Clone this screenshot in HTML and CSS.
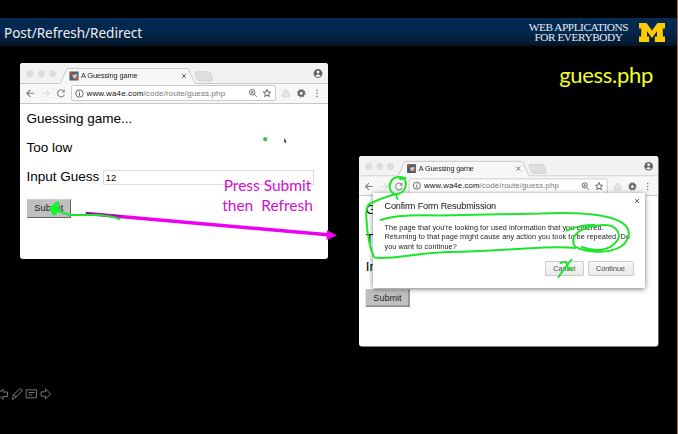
FILE: index.html
```
<!DOCTYPE html>
<html lang="en">
<head>
<meta charset="utf-8">
<title>Post/Refresh/Redirect</title>
<link rel="stylesheet" href="styles.css">
</head>
<body>
<svg class="defs" width="0" height="0">
  <symbol id="tabs" viewBox="0 0 308 21">
    <path d="M0 20.500H39.500Q40.500 20.500 41 19.500L46.500 6.500Q47 5.500 48 5.500H167Q168 5.500 168.500 6.500L174.500 19.500Q175 20.500 176 20.500H308V21H0Z" fill="#f7f7f7"/>
    <path d="M0 20.500H39.500Q40.500 20.500 41 19.500L46.500 6.500Q47 5.500 48 5.500H167Q168 5.500 168.500 6.500L174.500 19.500Q175 20.500 176 20.500H308" fill="none" stroke="#c8c8c8"/>
    <g fill="#dcdcdc"><circle cx="10" cy="10.700" r="3.500"/><circle cx="21.300" cy="10.700" r="3.500"/><circle cx="32.500" cy="10.700" r="3.500"/></g>
    <path d="M176 8.800H188.500Q190 8.800 190.600 10.300L192.600 16.200Q193 18 191.500 18H179.500Q178 18 177.300 16.500L175 10.500Q174.500 8.800 176 8.800Z" fill="#dedede" stroke="#c9c9c9" stroke-width=".7"/>
    <rect x="49.500" y="8.500" width="9" height="9" fill="#54545a"/><path d="M50 9h3v3h-3zM55 14h3v3h-3z" fill="#b14d47"/><path d="M53 9h5v3h-4zM50 14h3v3h-3z" fill="#426583"/><path d="M52 12l5-1v3l-3 2z" fill="#cfc4bd"/>
    <path d="M162 11L166 15M166 11L162 15" stroke="#555" stroke-width=".9"/>
    <circle cx="298" cy="10.500" r="4.400" fill="#606060"/><circle cx="298" cy="9" r="1.500" fill="#f6f6f6"/><path d="M295.300 12.700Q298 10.500 300.700 12.700Q298 15.300 295.300 12.700Z" fill="#f6f6f6"/>
  </symbol>
  <symbol id="nav" viewBox="0 0 51 20">
    <path d="M14 10.300H7M10.300 6.800L6.800 10.300L10.300 13.800" fill="none" stroke="#777" stroke-width="1.100"/>
    <path d="M22 10.300H29M25.700 6.800L29.200 10.300L25.700 13.800" fill="none" stroke="#ddd" stroke-width="1.100"/>
    <path d="M44 8.300A3.500 3.500 0 1 0 44.500 11.300" fill="none" stroke="#888" stroke-width="1.100"/><path d="M44.700 6.300V9.500H41.500Z" fill="#888"/>
  </symbol>
  <symbol id="info" viewBox="0 0 9 9"><circle cx="4.500" cy="4.500" r="3.700" fill="none" stroke="#555" stroke-width=".9"/><path d="M4.500 4.200V6.700M4.500 2.300V3.300" stroke="#555"/></symbol>
  <symbol id="search-star" viewBox="0 0 24 10">
    <circle cx="4.200" cy="4.300" r="2.700" fill="none" stroke="#666"/><path d="M6.200 6.300L8.800 8.800M2.900 4.300H5.500M4.200 3V5.600" stroke="#666" stroke-width=".9"/>
    <path d="M19 1.300L20.100 4L22.700 4.200L20.700 5.900L21.300 8.600L19 7.200L16.700 8.600L17.300 5.900L15.300 4.200L17.900 4Z" fill="none" stroke="#555" stroke-width=".9"/>
  </symbol>
  <symbol id="tools" viewBox="0 0 50 20">
    <path d="M8.500 6.500H11L14.500 12.800L13.200 14.500H7L5.500 12.300Z" fill="#ddd"/><path d="M9.700 9L8.200 12.500H12Z" fill="#eee"/>
    <circle cx="25.300" cy="10.300" r="2.500" fill="none" stroke="#666" stroke-width="1.900"/><circle cx="25.300" cy="10.300" r="3.700" fill="none" stroke="#666" stroke-width="1.100" stroke-dasharray="1.450 1.450"/>
    <g fill="#777"><circle cx="41" cy="7.200" r=".8"/><circle cx="41" cy="10.300" r=".8"/><circle cx="41" cy="13.400" r=".8"/></g>
  </symbol>
</svg>

<main class="slide">
  <header class="banner">
    <h1>Post/Refresh/Redirect</h1>
    <div class="brand">
      <p class="course">WEB APPLICATIONS<br>FOR EVERYBODY</p>
      <svg class="logo" viewBox="0 0 26 19"><path d="M0 0H7.500L13 7.500L18.500 0H26V5.500H23.800V13.500H26V19H15.800V13.500H18V8.200L13 15L8 8.200V13.500H10.200V19H0V13.500H2.200V5.500H0Z" fill="#ffcb05"/></svg>
    </div>
  </header>
  <section class="stage">
    <article class="window">
      <div class="tabs"><svg><use href="#tabs"/></svg><span class="tab-title">A Guessing game</span></div>
      <div class="toolbar">
        <svg class="nav"><use href="#nav"/></svg>
        <div class="address"><svg class="info"><use href="#info"/></svg><span class="url"><b>www.wa4e.com</b>/code/route/guess.php</span><svg class="actions"><use href="#search-star"/></svg></div>
        <svg class="tools"><use href="#tools"/></svg>
      </div>
      <div class="page">
        <p class="heading">Guessing game...</p>
        <p class="result">Too low</p>
        <p class="field"><label>Input Guess</label><span class="input">12</span></p>
        <button>Submit</button>
      </div>
    </article>
    <div class="right">
      <h2>guess.php</h2>
      <article class="window small">
        <div class="tabs"><svg><use href="#tabs"/></svg><span class="tab-title">A Guessing game</span></div>
        <div class="toolbar">
          <svg class="nav"><use href="#nav"/></svg>
          <div class="address"><svg class="info"><use href="#info"/></svg><span class="url"><b>www.wa4e.com</b>/code/route/guess.php</span><svg class="actions"><use href="#search-star"/></svg></div>
          <svg class="tools"><use href="#tools"/></svg>
        </div>
        <div class="page">
          <p class="heading">G</p>
          <p class="result">T</p>
          <p class="field"><label>In</label></p>
          <button>Submit</button>
        </div>
      </article>
    </div>
  </section>

  <section class="dialog">
    <svg class="close" viewBox="0 0 6 6"><path d="M1 1L5 5M5 1L1 5" stroke="#555" stroke-width=".9"/></svg>
    <h3>Confirm Form Resubmission</h3>
    <p class="message">The page that you're looking for used information that you entered.<br>Returning to that page might cause any action you took to be repeated. Do<br>you want to continue?</p>
    <div class="choices"><span class="choice cancel">Cancel</span><span class="choice">Continue</span></div>
  </section>

  <p class="note">Press Submit<br>then&nbsp; Refresh</p>

  <svg class="ink" viewBox="0 0 678 434" fill="none" stroke-linecap="round" stroke-linejoin="round">
    <path d="M86 213.500L328 234.800" stroke="#ec00ef" stroke-width="3.600" stroke-linecap="butt"/>
    <path d="M86 213L121 216" stroke="#8b168c" stroke-width="1.300"/>
    <path d="M327 230L337 235.500L326.500 240Z" fill="#f000f5"/>
    <g stroke="#1de52b" stroke-width="2">
      <path d="M55 209.500L63 212.800L70 215H99Q111 216 119.500 219"/>
      <path d="M50 208L56 203L58.500 202L57.500 206L59.500 210L54 215L52 212L50.500 209Z" fill="#10f52b" stroke="#10f52b" stroke-width="1.500"/>
      <circle cx="265.200" cy="139.300" r="1.300" stroke="#22b52b" stroke-width="1.500"/>
      <path d="M397.500 199L395.500 194M390.500 182Q387 190 395 194.500Q403 194 405.500 187Q407 178 401 177Q391 176 390 185M400 179L405.500 178"/>
      <path d="M394 194.500C385 197 378 200 371 203C366 205 365.500 211 366.500 220C367 233 370 250 374.500 257.500C390 260 415 253 448 252C480 252 500 250 525 248.500C550 247 567 247 575 248"/>
      <path d="M381 220C394 215 415 215 440 215.500C475 215 510 214 540 213.500C575 212 605 214 619 221C632 227 631 238 622 246C606 256 578 251 574 245C570 234 583 226 603 225C617 224 623 236 616 242C609 251 594 252 582 247"/>
      <path d="M566.500 230.500Q579 225 594 225"/>
      <path d="M558.500 277L565 268L571.500 259.500M560.500 263Q567 260 567 265Q568 271 572 268.500"/>
    </g>
    <path d="M284 138L286.500 141.500L284.500 142.500Z" fill="#111"/><path d="M285.500 141.500V142.500" stroke="#197024"/>
    <g stroke="#777" stroke-width="1">
      <path d="M0 392L3 389V392H7.500V396.500H3V399.500L0 396.500"/>
      <path d="M12.500 399L13.500 394.500L20 388.800Q22.500 388.500 22 391L15.500 397.500ZM14 394.500L16 397"/>
      <rect x="26.500" y="389.800" width="10" height="8"/><path d="M29 392.500H34M29 395H32"/>
      <path d="M41.500 391.800H45.500V388.800L50.500 394L45.500 399V396.200H41.500Z"/>
    </g>
  </svg>
</main>
</body>
</html>
```

FILE: styles.css
```
* { box-sizing: border-box; }
body { margin: 0; background: #000; font-family: "Liberation Sans", Arial, sans-serif; }
h1, h2, h3, p { margin: 0; font-weight: 400; }
svg { display: block; }
.defs { position: absolute; }
.slide { position: relative; width: 678px; height: 434px; padding-top: 18px; overflow: hidden; background: #000; border-right: 1px solid #bd663d; }
.banner { height: 28px; display: flex; align-items: center; justify-content: space-between; padding: 0 12px 0 4px; background: linear-gradient(#052b54, #03264b 55%, #031b32 88%, #02111f); color: #eee; }
.banner h1 { font: 13.5px/28px "Noto Sans", sans-serif; padding-top: 1px; }
.brand { display: flex; align-items: center; gap: 11px; }
.course { font: 11.3px/10.5px "Liberation Serif", serif; text-align: center; white-space: nowrap; color: #e5edf5; letter-spacing: -.45px; }
.logo { width: 26px; height: 19px; }
.stage { display: flex; height: 388px; padding-left: 19.5px; gap: 31px; }
.window { flex: none; width: 308px; height: 196px; margin-top: 16.5px; border-radius: 3px; overflow: hidden; background: #fff; }
.tabs { display: grid; height: 21px; background: #f2f2f2; }
.tabs > * { grid-area: 1 / 1; }
.tabs svg { width: 308px; height: 21px; }
.tab-title { padding-left: 61.5px; font-size: 7.5px; line-height: 26px; height: 21px; color: #222; white-space: nowrap; letter-spacing: -.18px; z-index: 1; }
.toolbar { display: flex; height: 20px; align-items: center; background: #f7f7f7; border-bottom: 1px solid #c6c6c6; }
.nav { width: 51px; height: 20px; }
.address { width: 205px; height: 16px; display: flex; align-items: center; padding: 0 3px; border: 1px solid #ccc; border-radius: 2px; background: #fff; }
.info { width: 9px; height: 9px; }
.url { flex: 1; padding-left: 3px; color: #777; font-size: 8px; letter-spacing: .12px; white-space: nowrap; }
.url b { color: #111; font-weight: 400; }
.actions { width: 24px; height: 10px; }
.tools { width: 50px; height: 20px; }
.page { padding: 5px 14px 0 7px; font-size: 13.5px; line-height: 19px; }
.heading, .result, .field { height: 19px; }
.heading { margin-bottom: 10px; }
.result { margin-bottom: 10px; }
.field { display: flex; align-items: center; gap: 3.5px; margin-bottom: 13.5px; white-space: nowrap; }
.input { flex: 1; height: 15.5px; border: 1px solid #ddd; padding-left: 2px; font-size: 9.3px; line-height: 14.5px; margin-top: 3px; }
button { display: block; width: 44.5px; height: 18.5px; padding: 0; background: #bfbfbf; border: 1px solid; border-color: #ccc #666 #666 #bbb; border-radius: 0; font: 9.3px "Liberation Sans", sans-serif; color: #222; }
.right { width: 308px; }
h2 { height: 93px; padding: 12px 13.5px 0 0; text-align: right; color: #f3ff21; font: 22px/34px Lato, sans-serif; letter-spacing: -.3px; }
.small { transform: scale(.972); transform-origin: 0 0; }
.dialog { position: absolute; left: 372.5px; top: 193px; width: 272px; height: 94.5px; padding: 8px 11px 0 12px; background: #fff; box-shadow: 0 1px 5px #0008; color: #222; }
.close { position: absolute; top: 5px; right: 5px; width: 6px; height: 6px; }
.dialog h3 { font-size: 9.1px; line-height: 11px; letter-spacing: -.15px; color: #111; white-space: nowrap; }
.message { margin-top: 11px; font-size: 7.3px; line-height: 9.4px; letter-spacing: .06px; white-space: nowrap; }
.choices { display: flex; justify-content: flex-end; gap: 3.5px; margin-top: 9.5px; }
.choice { width: 46px; height: 15px; border: 1px solid #ccc; border-radius: 1px; background: linear-gradient(#f8f8f8, #e9e9e9); font-size: 7.2px; line-height: 13px; text-align: center; color: #444; }
.cancel { width: 39px; }
.note { position: absolute; left: 217px; top: 174.500px; width: 101px; text-align: center; font: 15.5px/20.5px Lato, sans-serif; color: #cf10cf; white-space: nowrap; }
.ink { position: absolute; left: 0; top: 0; width: 678px; height: 434px; pointer-events: none; }
```
